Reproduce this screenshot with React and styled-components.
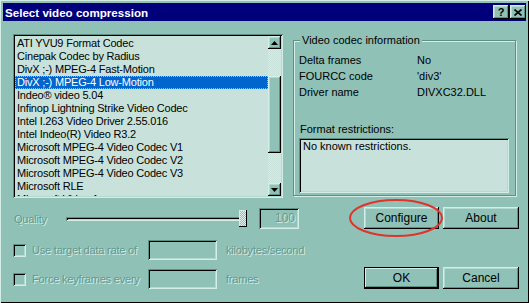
import React from "react";
import styled, { createGlobalStyle, css } from "styled-components";

const FACE = "#8fc1b7";
const LIGHT = "#d4ede7";
const SHADE = "#5f8f86";
const FIELD = "#c8e2db";
const DIM = "#62998f";

const GlobalStyle = createGlobalStyle`
  html, body {
    margin: 0;
    padding: 0;
    background: ${FACE};
  }
  body {
    font-family: "Liberation Sans", Arial, sans-serif;
    font-size: 11px;
    color: #000;
  }
`;

const raised = css`
  box-shadow: inset -1px -1px #000, inset 1px 1px ${LIGHT},
    inset -2px -2px ${SHADE}, inset 2px 2px #b4d9d1;
`;

const sunken = css`
  box-shadow: inset 1px 1px ${SHADE}, inset -1px -1px ${LIGHT},
    inset 2px 2px #000, inset -2px -2px #b4d9d1;
`;

const disabledText = css`
  color: ${DIM};
  text-shadow: 1px 1px 0 ${LIGHT};
`;

const Window = styled.div`
  width: 529px;
  height: 303px;
  box-sizing: border-box;
  padding: 3px;
  background: ${FACE};
  box-shadow: inset 1px 1px ${LIGHT}, inset -1px -1px #000;
  display: flex;
  flex-direction: column;
  overflow: hidden;
`;

const TitleBar = styled.div`
  height: 18px;
  background: #00007b;
  display: flex;
  align-items: center;
  padding: 0 2px;
  flex-shrink: 0;
`;

const Title = styled.div`
  flex: 1;
  color: #fff;
  font-weight: bold;
  font-size: 11.6px;
`;

const CaptionButtons = styled.div`
  display: flex;
  gap: 1px;
  margin-right: -2px;
`;

const CaptionButton = styled.div`
  width: 16px;
  height: 14px;
  background: ${FACE};
  ${raised};
  display: flex;
  align-items: center;
  justify-content: center;
  font-weight: bold;
  font-size: 11px;
  line-height: 1;
`;

const Body = styled.div`
  padding: 13px 7px 0 10px;
  display: flex;
  flex-direction: column;
`;

const TopRow = styled.div`
  display: flex;
  align-items: flex-start;
`;

const ListBox = styled.div`
  width: 270px;
  height: 164px;
  box-sizing: border-box;
  padding: 2px;
  background: ${FIELD};
  ${sunken};
  display: flex;
  overflow: hidden;
`;

const Items = styled.div`
  flex: 1;
  overflow: hidden;
  padding-top: 1px;
`;

const Item = styled.div`
  height: 13px;
  line-height: 13px;
  padding-left: 2px;
  white-space: nowrap;
  font-size: 11px;
  letter-spacing: -0.2px;
  box-sizing: border-box;
  ${(p) =>
    p.$selected &&
    css`
      background: #0065cc;
      color: #fff;
      outline: 1px dotted #f0b020;
      outline-offset: -1px;
    `}
`;

const ScrollBar = styled.div`
  width: 13px;
  display: flex;
  flex-direction: column;
  background: repeating-conic-gradient(#d7ebe5 0 25%, ${FIELD} 0 50%) 0 0 / 2px 2px;
`;

const ArrowButton = styled.div`
  height: 13px;
  background: ${FACE};
  ${raised};
  display: flex;
  align-items: center;
  justify-content: center;
  flex-shrink: 0;
`;

const Track = styled.div`
  flex: 1;
  display: flex;
  flex-direction: column;
  padding-top: ${(p) => p.$offset}px;
`;

const Thumb = styled.div`
  height: 77px;
  background: ${FACE};
  ${raised};
`;

const Group = styled.div`
  position: relative;
  margin-left: 10px;
  margin-top: 6px;
  width: 223px;
  height: 156px;
  box-sizing: border-box;
  border: 1px solid ${SHADE};
  box-shadow: inset 1px 1px ${LIGHT}, 1px 1px ${LIGHT};
  padding: 13px 5px 0 5px;
`;

const GroupLabel = styled.div`
  position: absolute;
  top: -7px;
  left: 6px;
  padding: 0 2px;
  background: ${FACE};
  line-height: 13px;
`;

const InfoGrid = styled.div`
  display: grid;
  grid-template-columns: 118px 1fr;
  row-gap: 3px;
  line-height: 13px;
`;

const RestrictLabel = styled.div`
  margin-top: 24px;
  padding-left: 1px;
  line-height: 13px;
`;

const RestrictBox = styled.div`
  margin-top: 2px;
  width: 210px;
  height: 55px;
  box-sizing: border-box;
  background: ${FIELD};
  ${sunken};
  padding: 2px 4px;
  line-height: 13px;
`;

const Bottom = styled.div`
  display: flex;
  margin-top: 9px;
`;

const LeftCol = styled.div`
  width: 351px;
  display: flex;
  flex-direction: column;
`;

const QualityRow = styled.div`
  height: 23px;
  display: flex;
  align-items: center;
`;

const DimLabel = styled.div`
  ${disabledText};
  width: ${(p) => p.$w || "auto"};
  flex-shrink: 0;
  margin-left: ${(p) => p.$ml || 0}px;
  white-space: nowrap;
  letter-spacing: -0.2px;
`;

const Slider = styled.div`
  position: relative;
  width: 181px;
  height: 17px;
  display: flex;
  align-items: center;
`;

const SliderTrack = styled.div`
  width: 100%;
  height: 4px;
  box-sizing: border-box;
  ${sunken};
  background: ${FACE};
`;

const SliderThumb = styled.div`
  position: absolute;
  right: 0;
  top: 0;
  width: 8px;
  height: 17px;
  box-shadow: inset -1px -1px #000, inset 1px 1px ${LIGHT};
  background: repeating-conic-gradient(#e0f0ec 0 25%, ${FACE} 0 50%) 0 0 / 2px 2px;
`;

const Field = styled.div`
  width: ${(p) => p.$w}px;
  height: ${(p) => p.$h}px;
  box-sizing: border-box;
  ${sunken};
  background: ${FACE};
  margin-left: ${(p) => p.$ml || 0}px;
  flex-shrink: 0;
  text-align: right;
  padding: 3px 4px 0 0;
  line-height: 14px;
  font-size: 12px;
  ${disabledText};
`;

const CheckRow = styled.div`
  height: 20px;
  display: flex;
  align-items: center;
  margin-top: ${(p) => p.$mt}px;
`;

const CheckBox = styled.div`
  width: 13px;
  height: 13px;
  box-sizing: border-box;
  ${sunken};
  background: ${FACE};
  flex-shrink: 0;
`;

const RightCol = styled.div`
  display: flex;
  flex-direction: column;
`;

const ButtonRow = styled.div`
  display: flex;
  gap: 4px;
  margin-top: ${(p) => p.$mt || 0}px;
`;

const Button = styled.div`
  position: relative;
  width: ${(p) => p.$w || 75}px;
  height: 22px;
  box-sizing: border-box;
  background: ${FACE};
  ${raised};
  display: flex;
  align-items: center;
  justify-content: center;
  font-size: 12px;
  ${(p) =>
    p.$default &&
    css`
      box-shadow: inset 1px 1px #000, inset -1px -1px #000,
        inset -2px -2px #000, inset 2px 2px ${LIGHT},
        inset -3px -3px ${SHADE};
    `}
`;

const Circle = styled.svg`
  position: absolute;
  left: -16px;
  top: -9px;
  pointer-events: none;
`;

const codecs = [
  "ATI YVU9 Format Codec",
  "Cinepak Codec by Radius",
  "DivX ;-) MPEG-4 Fast-Motion",
  "DivX ;-) MPEG-4 Low-Motion",
  "Indeo® video 5.04",
  "Infinop Lightning Strike Video Codec",
  "Intel I.263 Video Driver 2.55.016",
  "Intel Indeo(R) Video R3.2",
  "Microsoft MPEG-4 Video Codec V1",
  "Microsoft MPEG-4 Video Codec V2",
  "Microsoft MPEG-4 Video Codec V3",
  "Microsoft RLE",
  "Microsoft Video 1",
];

const Arrow = ({ up }) => (
  <svg width="7" height="4" viewBox="0 0 7 4">
    <path d={up ? "M3.5 0 L7 4 L0 4 Z" : "M0 0 L7 0 L3.5 4 Z"} fill="#000" />
  </svg>
);

export default function App() {
  return (
    <>
      <GlobalStyle />
      <Window>
        <TitleBar>
          <Title>Select video compression</Title>
          <CaptionButtons>
            <CaptionButton>?</CaptionButton>
            <CaptionButton>
              <svg width="8" height="7" viewBox="0 0 8 7">
                <path d="M0.5 0.5 L7.5 6.5 M7.5 0.5 L0.5 6.5" stroke="#000" strokeWidth="1.6" />
              </svg>
            </CaptionButton>
          </CaptionButtons>
        </TitleBar>
        <Body>
          <TopRow>
            <ListBox>
              <Items>
                {codecs.map((c, i) => (
                  <Item key={c} $selected={i === 3}>
                    {c}
                  </Item>
                ))}
              </Items>
              <ScrollBar>
                <ArrowButton>
                  <Arrow up />
                </ArrowButton>
                <Track $offset={27}>
                  <Thumb />
                </Track>
                <ArrowButton>
                  <Arrow />
                </ArrowButton>
              </ScrollBar>
            </ListBox>
            <Group>
              <GroupLabel>Video codec information</GroupLabel>
              <InfoGrid>
                <span>Delta frames</span>
                <span>No</span>
                <span>FOURCC code</span>
                <span>'div3'</span>
                <span>Driver name</span>
                <span>DIVXC32.DLL</span>
              </InfoGrid>
              <RestrictLabel>Format restrictions:</RestrictLabel>
              <RestrictBox>No known restrictions.</RestrictBox>
            </Group>
          </TopRow>
          <Bottom>
            <LeftCol>
              <QualityRow>
                <DimLabel $w="52px" $ml={1}>
                  Quality
                </DimLabel>
                <Slider>
                  <SliderTrack />
                  <SliderThumb />
                </Slider>
                <Field $w={40} $h={21} $ml={12}>
                  100
                </Field>
              </QualityRow>
              <CheckRow $mt={10}>
                <CheckBox />
                <DimLabel $w="116px" $ml={6}>
                  Use target data rate of
                </DimLabel>
                <Field $w={69} $h={20} />
                <DimLabel $ml={9}>kilobytes/second</DimLabel>
              </CheckRow>
              <CheckRow $mt={9}>
                <CheckBox />
                <DimLabel $w="116px" $ml={6}>
                  Force keyframes every
                </DimLabel>
                <Field $w={69} $h={20} />
                <DimLabel $ml={9}>frames</DimLabel>
              </CheckRow>
            </LeftCol>
            <RightCol>
              <ButtonRow>
                <Button>
                  Configure
                  <Circle width="96" height="40" viewBox="0 0 96 40">
                    <ellipse cx="48" cy="20" rx="46" ry="18" fill="none" stroke="#e2332b" strokeWidth="2" />
                  </Circle>
                </Button>
                <Button $w={76}>About</Button>
              </ButtonRow>
              <ButtonRow $mt={38}>
                <Button $default>OK</Button>
                <Button $w={76}>Cancel</Button>
              </ButtonRow>
            </RightCol>
          </Bottom>
        </Body>
      </Window>
    </>
  );
}
